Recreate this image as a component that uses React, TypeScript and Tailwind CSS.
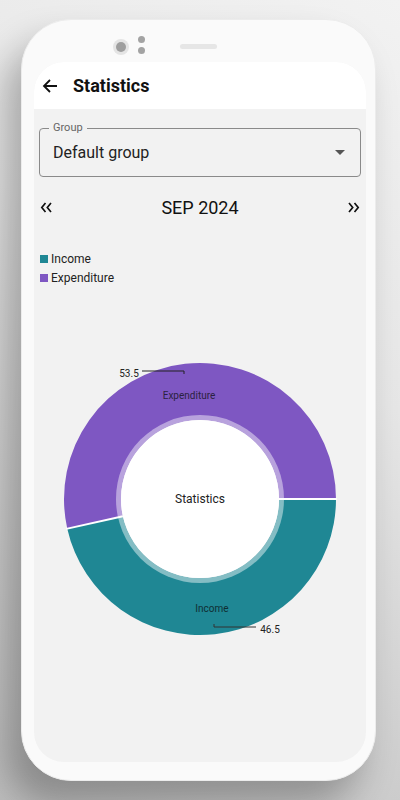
import React from "react";

const TEAL = "#1f8794";
const PURPLE = "#7e57c2";

const CX = 166;
const CY = 208;
const R_OUT = 136;
const R_IN = 79;

function pt(r: number, deg: number) {
  const a = (deg * Math.PI) / 180;
  return [CX + r * Math.cos(a), CY + r * Math.sin(a)];
}

function arc(start: number, end: number) {
  const large = end - start > 180 ? 1 : 0;
  const [x1, y1] = pt(R_OUT, start);
  const [x2, y2] = pt(R_OUT, end);
  const [x3, y3] = pt(R_IN, end);
  const [x4, y4] = pt(R_IN, start);
  return `M${x1} ${y1} A${R_OUT} ${R_OUT} 0 ${large} 1 ${x2} ${y2} L${x3} ${y3} A${R_IN} ${R_IN} 0 ${large} 0 ${x4} ${y4} Z`;
}

function Donut() {
  const split = 360 * 0.465;
  const [s1x1, s1y1] = pt(R_IN, 0);
  const [s1x2, s1y2] = pt(R_OUT + 1, 0);
  const [s2x1, s2y1] = pt(R_IN, split);
  const [s2x2, s2y2] = pt(R_OUT + 1, split);
  return (
    <svg width="332" height="400" viewBox="0 0 332 400" className="block">
      <path d={arc(0, split)} fill={TEAL} />
      <path d={arc(split, 360)} fill={PURPLE} />
      <line x1={s1x1} y1={s1y1} x2={s1x2} y2={s1y2} stroke="#fff" strokeWidth="2" />
      <line x1={s2x1} y1={s2y1} x2={s2x2} y2={s2y2} stroke="#fff" strokeWidth="2" />
      <circle cx={CX} cy={CY} r={84} fill="#fff" opacity="0.45" />
      <circle cx={CX} cy={CY} r={R_IN} fill="#fff" />
      <text x={CX} y={CY + 4} textAnchor="middle" fontSize="12" fill="#222">
        Statistics
      </text>

      <text x="155" y="108" textAnchor="middle" fontSize="10" fill="#2b2140">
        Expenditure
      </text>
      <polyline points="108,80 150,80 150,83" fill="none" stroke="#222" strokeWidth="1" />
      <text x="95" y="86" textAnchor="middle" fontSize="10" fill="#222">
        53.5
      </text>

      <text x="178" y="321" textAnchor="middle" fontSize="10" fill="#0f2e33">
        Income
      </text>
      <polyline points="180,333 180,336 222,336" fill="none" stroke="#333" strokeWidth="1" />
      <text x="236" y="342" textAnchor="middle" fontSize="10" fill="#222">
        46.5
      </text>
    </svg>
  );
}

function DoubleChevron({ dir }: { dir: "left" | "right" }) {
  return (
    <svg width="13" height="11" viewBox="0 0 13 11" className={dir === "right" ? "rotate-180" : ""}>
      <path d="M5.5 1 L1.8 5.5 L5.5 10 M11 1 L7.3 5.5 L11 10" fill="none" stroke="#111" strokeWidth="1.7" />
    </svg>
  );
}

export default function App() {
  return (
    <div
      className="relative h-[800px] w-[400px] overflow-hidden bg-[linear-gradient(210deg,#f2f2f2_0%,#e6e6e6_40%,#bdbdbd_100%)]"
      style={{ fontFamily: "Roboto, 'Noto Sans', sans-serif" }}
    >
      <div className="pl-[21px] pt-[19px]">
        <div className="h-[762px] w-[355px] rounded-[50px] border border-[#ececec] bg-[#fafafa] pt-[42px] pl-[12px] shadow-[-16px_24px_36px_rgba(0,0,0,0.28)]">
          {/* camera + speaker */}
          <div className="relative">
            <div className="absolute -top-[23px] left-[79px] flex h-[16px] w-[16px] items-center justify-center rounded-full bg-[#e4e4e4]">
              <div className="h-[10px] w-[10px] rounded-full bg-[#9e9e9e]" />
            </div>
            <div className="absolute -top-[26px] left-[104px] flex flex-col gap-[4px]">
              <div className="h-[7px] w-[7px] rounded-full bg-[#a3a3a3]" />
              <div className="h-[7px] w-[7px] rounded-full bg-[#a3a3a3]" />
            </div>
            <div className="absolute -top-[18px] left-[146px] h-[5px] w-[37px] rounded-full bg-[#e6e6e6]" />
          </div>

          <div className="h-[700px] w-[332px] overflow-hidden rounded-[30px] bg-[#f2f2f2]">
            <div className="flex h-[47px] items-center bg-white pl-[8px]">
              <svg width="16" height="16" viewBox="0 0 16 16">
                <path d="M15 8 H2 M8 2 L2 8 L8 14" fill="none" stroke="#111" strokeWidth="1.8" />
              </svg>
              <span className="ml-[15px] text-[18px] font-bold text-[#111]">Statistics</span>
            </div>

            <div className="px-[5px] pt-[19px]">
              <div className="relative h-[49px] rounded-[4px] border border-[#8a8a8a]">
                <span className="absolute -top-[8px] left-[9px] bg-[#f2f2f2] px-[4px] text-[11px] leading-[14px] text-[#666]">
                  Group
                </span>
                <div className="flex h-full items-center justify-between pl-[13px] pr-[15px]">
                  <span className="text-[16px] text-[#222]">Default group</span>
                  <svg width="10" height="5" viewBox="0 0 10 5">
                    <path d="M0 0 L10 0 L5 5 Z" fill="#555" />
                  </svg>
                </div>
              </div>

              <div className="mt-[17px] flex items-center justify-between pl-[1px] pr-[1px]">
                <DoubleChevron dir="left" />
                <span className="text-[18px] text-[#111]">SEP 2024</span>
                <DoubleChevron dir="right" />
              </div>

              <div className="mt-[31px] flex flex-col gap-[5px] pl-[1px]">
                <div className="flex items-center gap-[3px]">
                  <div className="h-[8px] w-[8px]" style={{ background: TEAL }} />
                  <span className="text-[12px] leading-[14px] text-[#222]">Income</span>
                </div>
                <div className="flex items-center gap-[3px]">
                  <div className="h-[8px] w-[8px]" style={{ background: PURPLE }} />
                  <span className="text-[12px] leading-[14px] text-[#222]">Expenditure</span>
                </div>
              </div>
            </div>

            <div className="mt-[6px]">
              <Donut />
            </div>
          </div>
        </div>
      </div>
    </div>
  );
}
